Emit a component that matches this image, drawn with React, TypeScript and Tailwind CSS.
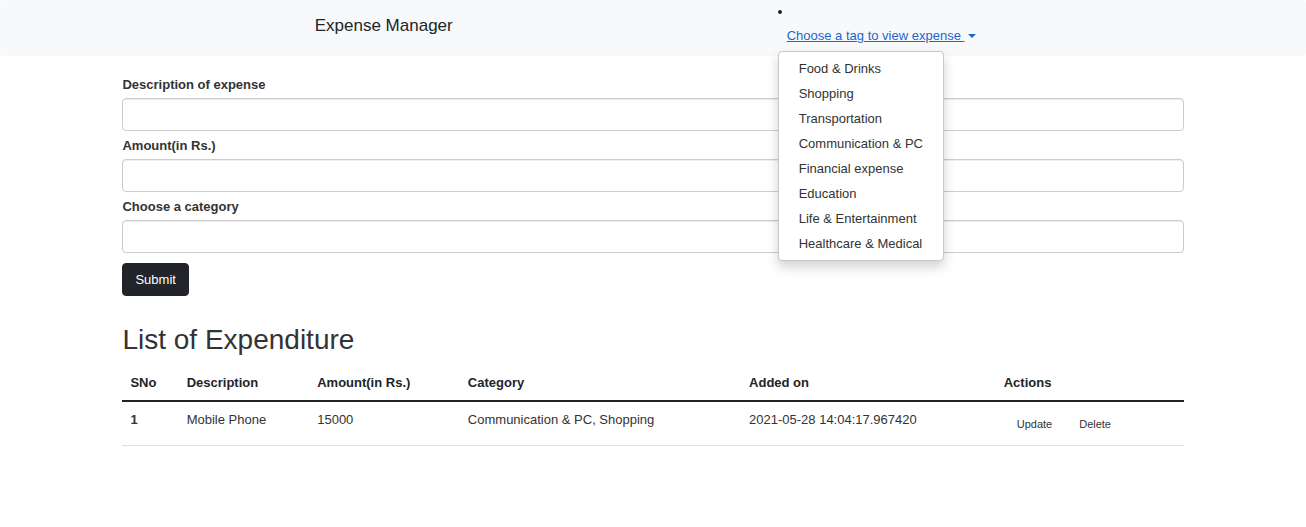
import { useState } from "react";

const tags = [
  "Food & Drinks",
  "Shopping",
  "Transportation",
  "Communication & PC",
  "Financial expense",
  "Education",
  "Life & Entertainment",
  "Healthcare & Medical",
];

const fields = [
  { id: "description", label: "Description of expense" },
  { id: "amount", label: "Amount(in Rs.)" },
  { id: "category", label: "Choose a category" },
];

const expenses = [
  {
    id: 1,
    description: "Mobile Phone",
    amount: 15000,
    category: "Communication & PC, Shopping",
    addedOn: "2021-05-28 14:04:17.967420",
  },
];

function TagMenu() {
  const [open, setOpen] = useState(true);
  return (
    <li className="relative">
      <button
        type="button"
        aria-expanded={open}
        onClick={() => setOpen(!open)}
        className="ml-[9px] flex items-center whitespace-nowrap text-[#1a66d2]"
      >
        <span className="whitespace-pre underline">Choose a tag to view expense </span>
        <svg viewBox="0 0 8 4" className="ml-1 h-1 w-2" fill="currentColor" aria-hidden="true">
          <path d="M0 0h8L4 4z" />
        </svg>
      </button>
      {open && (
        <ul className="absolute top-full left-0 z-10 mt-[5px] rounded-[4px] border border-[#c8c8c8] bg-white py-1 shadow-[0_6px_12px_rgba(0,0,0,0.18)]">
          {tags.map((tag) => (
            <li key={tag}>
              <a href="#" className="block px-5 py-[3px] leading-[19px] whitespace-nowrap hover:bg-gray-100">
                {tag}
              </a>
            </li>
          ))}
        </ul>
      )}
    </li>
  );
}

export default function App() {
  return (
    <div className="font-['Liberation_Sans',Arial,sans-serif] text-[13px] leading-5 text-[#333333]">
      <nav className="grid h-14 grid-cols-[24.1%_35.45%_1fr] rounded-[4px] bg-[#f8f9fa]">
        <a href="#" className="col-start-2 self-center pb-1 text-[17px] text-[#212529]">
          Expense Manager
        </a>
        <div className="pt-[10px]">
          <div className="size-[4px] rounded-full bg-[#212529]" />
          <ul className="mt-3">
            <TagMenu />
          </ul>
        </div>
      </nav>

      <main className="mx-auto w-[81.25%]">
        <form className="pt-[14px]" onSubmit={(event) => event.preventDefault()}>
          {fields.map((field) => (
            <div key={field.id} className="pt-[5px]">
              <label htmlFor={field.id} className="mb-[3px] block font-bold">
                {field.label}
              </label>
              <input
                id={field.id}
                type="text"
                className="block h-[33px] w-full rounded-[4px] border border-[#cccccc] bg-white px-3 shadow-[inset_0_1px_1px_rgba(0,0,0,0.075)] outline-none focus:border-[#66afe9]"
              />
            </div>
          ))}
          <button
            type="submit"
            className="mt-[10px] block h-[33px] rounded-[4px] border border-[#212529] bg-[#212529] px-3 text-white"
          >
            Submit
          </button>
        </form>

        <h2 className="mt-7 text-[28px] leading-8">List of Expenditure</h2>

        <table className="mt-[9px] w-full table-fixed border-collapse text-left">
          <colgroup>
            <col className="w-[5.3%]" />
            <col className="w-[12.3%]" />
            <col className="w-[14.2%]" />
            <col className="w-[26.5%]" />
            <col className="w-[24%]" />
            <col className="w-[17.7%]" />
          </colgroup>
          <thead>
            <tr className="border-b-2 border-[#212529] text-[#212529]">
              <th scope="col" className="px-2 pt-2 pb-[7px]">SNo</th>
              <th scope="col" className="px-2 pt-2 pb-[7px]">Description</th>
              <th scope="col" className="px-2 pt-2 pb-[7px]">Amount(in Rs.)</th>
              <th scope="col" className="px-2 pt-2 pb-[7px]">Category</th>
              <th scope="col" className="px-2 pt-2 pb-[7px]">Added on</th>
              <th scope="col" className="px-2 pt-2 pb-[7px]">Actions</th>
            </tr>
          </thead>
          <tbody>
            {expenses.map((expense) => (
              <tr key={expense.id} className="border-b border-[#dee2e6] align-top">
                <th scope="row" className="p-2">{expense.id}</th>
                <td className="p-2">{expense.description}</td>
                <td className="p-2">{expense.amount}</td>
                <td className="p-2">{expense.category}</td>
                <td className="p-2">{expense.addedOn}</td>
                <td className="p-2">
                  <div className="flex gap-px text-[11px]">
                    <button type="button" className="px-[13px] pt-1 pb-[3px]">Update</button>
                    <button type="button" className="px-[13px] pt-1 pb-[3px]">Delete</button>
                  </div>
                </td>
              </tr>
            ))}
          </tbody>
        </table>
      </main>
    </div>
  );
}
